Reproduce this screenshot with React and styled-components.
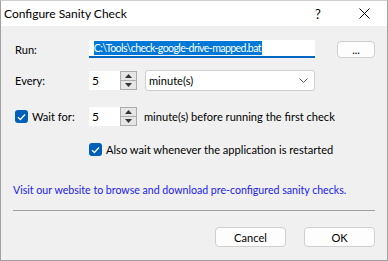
import React from 'react';
import styled, { createGlobalStyle } from 'styled-components';

const GlobalStyle = createGlobalStyle`
  html, body {
    margin: 0;
    padding: 0;
    background: #f0f0f0;
  }
  body {
    font-family: Lato, "Liberation Sans", sans-serif;
    font-size: 11.1px;
    color: #000;
    white-space: nowrap;
  }
`;

const Window = styled.div`
  width: 388px;
  height: 261px;
  box-sizing: border-box;
  border: 1px solid #a0a0a0;
  border-top-color: #d0d0d0;
  background: #f0f0f0;
  display: flex;
  flex-direction: column;
`;

const TitleBar = styled.div`
  height: 25px;
  background: #fff;
  display: flex;
  align-items: center;
  padding-left: 3px;
  font-size: 12px;
`;

const Title = styled.div`
  flex: 1;
`;

const TitleButton = styled.div`
  width: 46px;
  height: 25px;
  display: flex;
  align-items: center;
  justify-content: center;
  font-size: 13px;
`;

const Body = styled.div`
  flex: 1;
  display: flex;
  flex-direction: column;
  padding: 14px 12px 0 14px;
`;

const Row = styled.div`
  display: flex;
  align-items: center;
  height: ${p => p.h || 20}px;
  margin-bottom: ${p => p.mb || 0}px;
  padding-left: ${p => p.indent || 0}px;
`;

const Label = styled.div`
  width: 74px;
  display: flex;
  align-items: center;
  gap: 4px;
`;

const PathInput = styled.div`
  width: 227px;
  height: 18px;
  box-sizing: border-box;
  background: #fff;
  border-bottom: 2px solid #0067c0;
  display: flex;
  align-items: center;
  padding-left: 5px;
`;

const Selected = styled.span`
  background: #0078d7;
  color: #fff;
  line-height: 14px;
  font-size: 10.6px;
  letter-spacing: -0.6px;
  padding-right: 1px;
`;

const SmallButton = styled.div`
  width: 38px;
  height: 17px;
  margin-left: 22px;
  box-sizing: border-box;
  border: 1px solid #d0d0d0;
  border-radius: 4px;
  background: #fdfdfd;
  display: flex;
  align-items: center;
  justify-content: center;
  font-size: 11px;
  line-height: 1;
`;

const Spin = styled.div`
  display: flex;
  height: 19px;
`;

const SpinField = styled.div`
  width: 31px;
  background: #fff;
  display: flex;
  align-items: center;
  padding-left: 3px;
  box-sizing: border-box;
  font-size: 12px;
`;

const SpinButtons = styled.div`
  width: 17px;
  box-sizing: border-box;
  border: 1px solid #adadad;
  background: #e6e6e6;
  display: flex;
  flex-direction: column;
`;

const SpinHalf = styled.div`
  flex: 1;
  display: flex;
  align-items: center;
  justify-content: center;
  & + & {
    border-top: 1px solid #adadad;
  }
`;

const Select = styled.div`
  width: 170px;
  height: 21px;
  margin-left: 8px;
  box-sizing: border-box;
  border: 1px solid #cfcfcf;
  border-radius: 3px;
  background: #fff;
  display: flex;
  align-items: center;
  justify-content: space-between;
  padding: 0 6px 0 3px;
`;

const Check = styled.div`
  width: 13px;
  height: 13px;
  border-radius: 3px;
  background: #005fb8;
  display: flex;
  align-items: center;
  justify-content: center;
  flex-shrink: 0;
`;

const Text = styled.span`
  margin-left: ${p => p.ml || 0}px;
`;

const Link = styled.div`
  color: #2020f0;
  margin-top: auto;
  margin-left: -2px;
  line-height: 15px;
  font-size: 10.6px;
`;

const Separator = styled.div`
  height: 1px;
  background: #a0a0a0;
  margin: 12px 0 0 -2px;
`;

const Footer = styled.div`
  display: flex;
  justify-content: flex-end;
  gap: 18px;
  padding: 16px 0 13px;
`;

const Button = styled.div`
  width: 71px;
  height: 20px;
  box-sizing: border-box;
  border: 1px solid #d0d0d0;
  border-radius: 4px;
  background: #fdfdfd;
  display: flex;
  align-items: center;
  justify-content: center;
`;

const Arrow = ({ up }) => (
  <svg width="7" height="4" viewBox="0 0 7 4">
    <path d={up ? 'M0 4 L3.5 0 L7 4 Z' : 'M0 0 L3.5 4 L7 0 Z'} fill="#333" />
  </svg>
);

const Tick = () => (
  <svg width="9" height="8" viewBox="0 0 9 8">
    <path d="M1 4.2 L3.4 6.5 L8 1.5" fill="none" stroke="#fff" strokeWidth="1.3" />
  </svg>
);

const SpinBox = ({ value }) => (
  <Spin>
    <SpinField>{value}</SpinField>
    <SpinButtons>
      <SpinHalf><Arrow up /></SpinHalf>
      <SpinHalf><Arrow /></SpinHalf>
    </SpinButtons>
  </Spin>
);

export default function App() {
  return (
    <Window>
      <GlobalStyle />
      <TitleBar>
        <Title>Configure Sanity Check</Title>
        <TitleButton>?</TitleButton>
        <TitleButton>
          <svg width="11" height="11" viewBox="0 0 11 11">
            <path d="M0.5 0.5 L10.5 10.5 M10.5 0.5 L0.5 10.5" stroke="#000" strokeWidth="1" />
          </svg>
        </TitleButton>
      </TitleBar>
      <Body>
        <Row h={18} mb={12}>
          <Label>Run:</Label>
          <PathInput>
            <Selected>C:\Tools\check-google-drive-mapped.bat</Selected>
          </PathInput>
          <SmallButton>...</SmallButton>
        </Row>
        <Row h={21} mb={16}>
          <Label>Every:</Label>
          <SpinBox value="5" />
          <Select>
            <span>minute(s)</span>
            <svg width="9" height="5" viewBox="0 0 9 5">
              <path d="M0.5 0.5 L4.5 4.5 L8.5 0.5" fill="none" stroke="#555" strokeWidth="1" />
            </svg>
          </Select>
        </Row>
        <Row h={19} mb={17}>
          <Label>
            <Check><Tick /></Check>
            <span>Wait for:</span>
          </Label>
          <SpinBox value="5" />
          <Text ml={7}>minute(s) before running the first check</Text>
        </Row>
        <Row h={13} indent={74}>
          <Check><Tick /></Check>
          <Text ml={4}>Also wait whenever the application is restarted</Text>
        </Row>
        <Link>Visit our website to browse and download pre-configured sanity checks.</Link>
        <Separator />
        <Footer>
          <Button>Cancel</Button>
          <Button>OK</Button>
        </Footer>
      </Body>
    </Window>
  );
}
